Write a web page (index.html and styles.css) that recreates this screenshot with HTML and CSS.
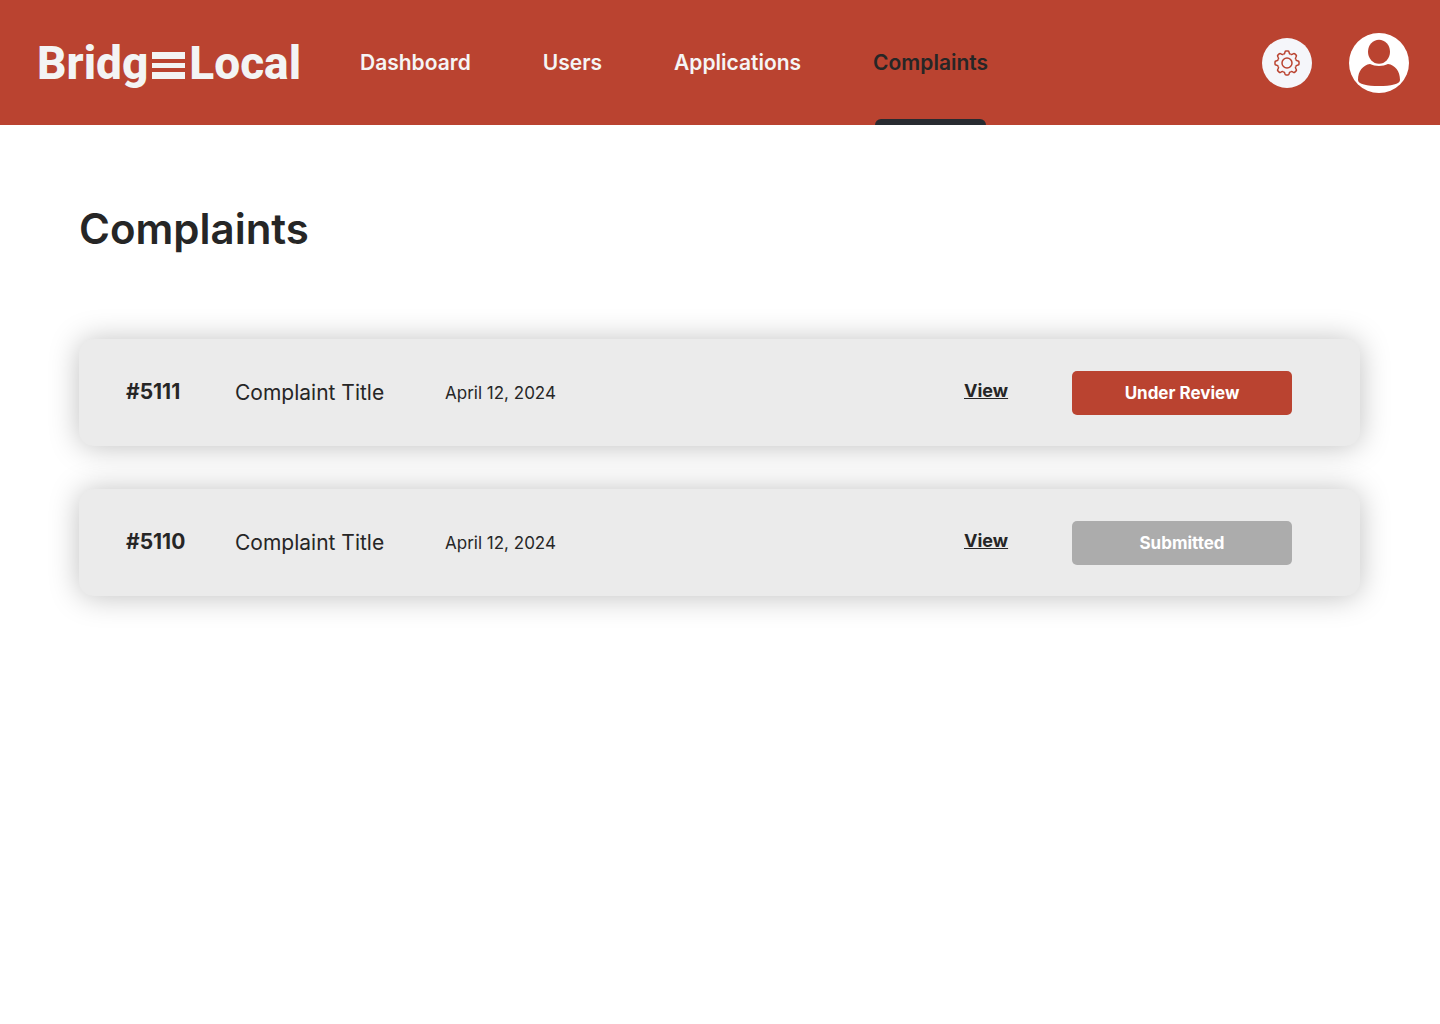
FILE: index.html
```html
<!DOCTYPE html>
<html lang="en">
<head>
<meta charset="utf-8">
<meta name="viewport" content="width=device-width, initial-scale=1">
<title>Complaints</title>
<link rel="stylesheet" href="styles.css">
</head>
<body>
<header class="header">
  <a class="logo" href="#" aria-label="Bridge Local">
    <span>Bridg</span>
    <svg class="logo-bars" width="33" height="27" viewBox="0 0 33 27" aria-hidden="true">
      <path d="M0 0h33v7H0zM0 11h33v5H0zM0 20h33v7H0z"/>
    </svg>
    <span>Local</span>
  </a>
  <nav class="nav">
    <a class="nav-link" href="#">Dashboard</a>
    <a class="nav-link" href="#">Users</a>
    <a class="nav-link" href="#">Applications</a>
    <a class="nav-link nav-link-active" href="#" aria-current="page">Complaints</a>
  </nav>
  <div class="actions">
    <button class="settings" type="button" aria-label="Settings">
      <svg width="26" height="26" viewBox="-13 -13 26 26" aria-hidden="true">
        <defs>
          <path id="tooth" d="M-3.6-8.7C-2.7-9.1-2.3-9.4-2.2-10.2L-2-11.1Q-1.8-12-.9-12H.9Q1.8-12 2-11.1L2.2-10.2C2.3-9.4 2.7-9.1 3.6-8.7"/>
        </defs>
        <g class="gear-line">
          <circle r="5"/>
          <use href="#tooth"/>
          <use href="#tooth" transform="rotate(45)"/>
          <use href="#tooth" transform="rotate(90)"/>
          <use href="#tooth" transform="rotate(135)"/>
          <use href="#tooth" transform="rotate(180)"/>
          <use href="#tooth" transform="rotate(225)"/>
          <use href="#tooth" transform="rotate(270)"/>
          <use href="#tooth" transform="rotate(315)"/>
        </g>
      </svg>
    </button>
    <button class="profile" type="button" aria-label="Profile">
      <svg width="60" height="60" viewBox="0 0 60 60" aria-hidden="true">
        <circle class="profile-disc" cx="30" cy="30" r="30"/>
        <ellipse class="profile-figure" cx="30" cy="18.8" rx="11" ry="12"/>
        <path class="profile-figure" d="M21 31C14 32 9 38 9 47C9 51 18 53 30 53S51 51 51 47C51 38 46 32 39 31C34 33.6 26 33.6 21 31Z"/>
      </svg>
    </button>
  </div>
</header>
<main class="main">
  <h1 class="title">Complaints</h1>
  <ul class="list">
    <li class="card">
      <span class="card-id">#5111</span>
      <span class="card-title">Complaint Title</span>
      <time class="card-date" datetime="2024-04-12">April 12, 2024</time>
      <a class="card-view" href="#">View</a>
      <button class="status status-review" type="button">Under Review</button>
    </li>
    <li class="card">
      <span class="card-id">#5110</span>
      <span class="card-title">Complaint Title</span>
      <time class="card-date" datetime="2024-04-12">April 12, 2024</time>
      <a class="card-view" href="#">View</a>
      <button class="status status-submitted" type="button">Submitted</button>
    </li>
  </ul>
</main>
</body>
</html>
```
FILE: styles.css
```css
* {
  box-sizing: border-box;
}

body {
  margin: 0;
  background: #fff;
  color: #262626;
  font-family: Inter, "Liberation Sans", sans-serif;
}

.header {
  display: flex;
  align-items: stretch;
  height: 125px;
  padding: 0 31px 0 37px;
  background: #ba4330;
}

.logo {
  display: flex;
  flex: 0 0 323px;
  align-items: center;
  gap: 4px;
  color: #f3f4f4;
  font-family: Roboto, "Liberation Sans", sans-serif;
  font-size: 46px;
  font-weight: 800;
  line-height: 60px;
  text-decoration: none;
}

.logo-bars {
  margin-top: 5px;
  fill: #f3f4f4;
}

.nav {
  display: flex;
  gap: 72px;
}

.nav-link {
  position: relative;
  display: flex;
  align-items: center;
  color: #f5f5f5;
  font-size: 21px;
  font-weight: 600;
  text-decoration: none;
}

.nav-link-active {
  color: #262626;
}

.nav-link-active::after {
  content: "";
  position: absolute;
  right: 2px;
  bottom: 0;
  left: 2px;
  height: 6px;
  border-radius: 6px 6px 0 0;
  background: #282b30;
}

.actions {
  display: flex;
  align-items: center;
  gap: 37px;
  margin-left: auto;
}

.settings,
.profile {
  display: grid;
  place-items: center;
  padding: 0;
  border: 0;
  border-radius: 50%;
  cursor: pointer;
}

.settings {
  width: 50px;
  height: 50px;
  background: #f5f6fa;
}

.gear-line {
  fill: none;
  stroke: #ba4330;
  stroke-width: 1.5;
}

.profile {
  width: 60px;
  height: 60px;
  background: none;
}

.profile-disc {
  fill: #fff;
}

.profile-figure {
  fill: #ba4330;
}

.main {
  padding: 80px 80px 80px 79px;
}

.title {
  margin: 0 0 86px;
  font-size: 42px;
  font-weight: 600;
  line-height: 48px;
}

.list {
  display: grid;
  gap: 43px;
  margin: 0;
  padding: 0;
  list-style: none;
}

.card {
  display: grid;
  grid-template-columns: 109px 210px 1fr 108px 220px;
  align-items: center;
  min-height: 107px;
  padding: 0 68px 0 47px;
  border-radius: 15px;
  background: #ebebeb;
  box-shadow: 0 1px 30px rgb(0 0 0 / 25%);
}

.card-id {
  padding-bottom: 2px;
  font-size: 21px;
  font-weight: 700;
}

.card-title {
  font-size: 21px;
}

.card-date {
  font-size: 17px;
}

.card-view {
  justify-self: start;
  padding-bottom: 4px;
  color: inherit;
  font-size: 18px;
  font-weight: 700;
}

.status {
  height: 44px;
  border: 0;
  border-radius: 5px;
  color: #fff;
  font: inherit;
  font-size: 17px;
  font-weight: 700;
  cursor: pointer;
}

.status-review {
  background: #ba4330;
}

.status-submitted {
  background: #acacac;
}
```
